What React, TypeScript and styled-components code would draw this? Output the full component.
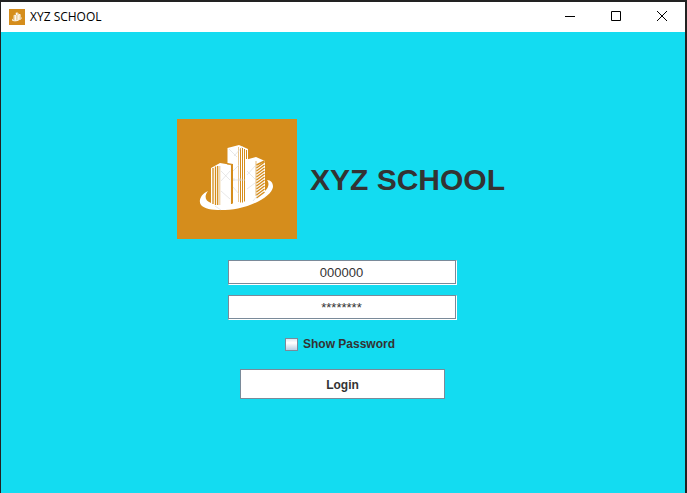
import React, { useState } from "react";
import styled, { createGlobalStyle } from "styled-components";

const steel = "#7a8a99";
const ink = "#333333";
const orange = "#d58d1c";

const GlobalStyle = createGlobalStyle`
  *, *::before, *::after { box-sizing: border-box; }
  body {
    margin: 0;
    background: #222222;
    font-family: "Liberation Sans", Arial, sans-serif;
    color: ${ink};
  }
`;

const Window = styled.div`
  display: flex;
  flex-direction: column;
  min-height: 100vh;
  border: solid #222222;
  border-width: 2px 2px 0 1px;
`;

const TitleBar = styled.header`
  display: flex;
  align-items: center;
  height: 30px;
  padding-left: 8px;
  gap: 5px;
  background: #ffffff;
`;

const Caption = styled.span`
  flex: 1;
  font-family: "Open Sans", "Noto Sans", sans-serif;
  font-size: 12px;
  line-height: 16px;
  color: #000000;
`;

const Controls = styled.div`
  display: flex;
  align-self: stretch;
`;

const ControlButton = styled.button`
  display: grid;
  place-items: center;
  width: 46px;
  padding: 0 0 2px;
  border: 0;
  background: transparent;
  color: #000000;
`;

const LoginForm = styled.form`
  flex: 1;
  display: flex;
  flex-direction: column;
  align-items: center;
  padding: 87px 1px 0 0;
  background: #13dcf1;
`;

const Brand = styled.div`
  display: flex;
  align-items: center;
  gap: 13px;
  padding-right: 3px;
  margin-bottom: 21px;
`;

const Heading = styled.h1`
  margin: 0;
  padding-top: 2px;
  font-size: 30px;
  line-height: 36px;
  font-weight: bold;
`;

const Field = styled.input`
  width: 229px;
  height: 25px;
  margin-bottom: 10px;
  padding: 0 4px 0 2px;
  border: 1px solid;
  border-color: ${steel} #ffffff #ffffff ${steel};
  border-radius: 0;
  outline: 0;
  background: #ffffff;
  box-shadow: inset -1px -1px 0 ${steel};
  color: ${ink};
  font-family: inherit;
  font-size: 13px;
  text-align: center;
`;

const CheckRow = styled.label`
  display: flex;
  align-items: center;
  gap: 5px;
  height: 13px;
  margin: 8px 0 18px;
  padding-right: 5px;
  font-size: 12px;
  line-height: 15px;
  font-weight: bold;
`;

const CheckBox = styled.input`
  appearance: none;
  width: 13px;
  height: 13px;
  margin: 0;
  border: 1px solid ${steel};
  background: linear-gradient(#dde8f3, #ffffff 35%, #b8cfe5);
  &:checked {
    background: ${ink};
    box-shadow: inset 0 0 0 2px #ffffff;
  }
`;

const LoginButton = styled.button`
  width: 205px;
  height: 30px;
  padding: 2px 0 0;
  border: 1px solid ${steel};
  background: #ffffff;
  color: ${ink};
  font-family: inherit;
  font-size: 12px;
  font-weight: bold;
`;

function Logo({ size }: { size: number }) {
  const slants = Array.from({ length: 12 }, (_, i) => 44 + i * 3);
  return (
    <svg width={size} height={size} viewBox="0 0 120 120" aria-hidden="true">
      <rect width="120" height="120" fill={orange} />
      <path
        fill="#fff"
        d="M31 72C24 75 21 82 24 86C29 92 47 92 61 89.500C79 86 95 76 96 68C96 64 94 61 90 61C93 65 91 69 88 72L79 77L70 80L54 85L34 84C28 82 27 77 31 72Z"
      />
      <path fill="#fff" d="M34 49L43 44L55 46V87H34Z" />
      <path fill="#fff" d="M50.500 29L62 26L71 30V85H56V45L50.500 44Z" />
      <path fill="#fff" d="M68 41L79 38L88 42V73L79 79L68 83Z" />
      <g stroke={orange} fill="none">
        <path d="M36 49V85M38.500 47.500V86M40.700 47V86" strokeWidth="1.300" />
        <path d="M42.800 47V86M61.500 28V83" strokeWidth="0.500" />
        <path d="M54.500 46V85" strokeWidth="1.100" />
        <path d="M63.500 29V83.500M65.500 29V83.500M67.500 30V82.500M69.500 31V40" strokeWidth="1" />
        <path d="M50 45L55 46" strokeWidth="0.700" />
        <path d="M79 42V77" strokeWidth="0.600" />
        {slants.map((y) => (
          <path
            key={y}
            d={`M79.500 ${y + 2}L87.500 ${Math.max(42, y - 4)}`}
            strokeWidth="1.400"
          />
        ))}
      </g>
      <path
        d="M52 30L60 38M66 27L57 37M44 52L53 61M53 52L44 62M56 52L62 46M56 68L62 75M70 52L78 60M78 47L70 56M70 70L78 64M44 72L53 80M82 75L76 82M38 87L44 91M56 61h12M57 59v3M63 59v3"
        stroke="#d9d9d9"
        strokeWidth="0.600"
        fill="none"
      />
    </svg>
  );
}

function Glyph({ d }: { d: string }) {
  return (
    <svg width="12" height="12" viewBox="0 0 12 12" aria-hidden="true">
      <path d={d} fill="none" stroke="currentColor" strokeWidth="1" />
    </svg>
  );
}

export default function App() {
  const [user, setUser] = useState("000000");
  const [password, setPassword] = useState("password");
  const [visible, setVisible] = useState(false);

  const editPassword = (next: string) => {
    if (visible) {
      setPassword(next);
      return;
    }
    const typed = next.replace(/\*/g, "");
    setPassword(password.slice(0, next.length - typed.length) + typed);
  };

  return (
    <>
      <GlobalStyle />
      <Window>
        <TitleBar>
          <Logo size={16} />
          <Caption>XYZ SCHOOL</Caption>
          <Controls>
            <ControlButton type="button" aria-label="Minimize">
              <Glyph d="M1 6.500H11" />
            </ControlButton>
            <ControlButton type="button" aria-label="Maximize">
              <Glyph d="M1.500 1.500H10.500V10.500H1.500Z" />
            </ControlButton>
            <ControlButton type="button" aria-label="Close">
              <Glyph d="M1 1L11 11M11 1L1 11" />
            </ControlButton>
          </Controls>
        </TitleBar>
        <LoginForm onSubmit={(e) => e.preventDefault()}>
          <Brand>
            <Logo size={120} />
            <Heading>XYZ SCHOOL</Heading>
          </Brand>
          <Field
            aria-label="User ID"
            value={user}
            onChange={(e) => setUser(e.target.value)}
          />
          <Field
            aria-label="Password"
            autoComplete="off"
            value={visible ? password : "*".repeat(password.length)}
            onChange={(e) => editPassword(e.target.value)}
          />
          <CheckRow>
            <CheckBox
              type="checkbox"
              checked={visible}
              onChange={(e) => setVisible(e.target.checked)}
            />
            Show Password
          </CheckRow>
          <LoginButton type="submit">Login</LoginButton>
        </LoginForm>
      </Window>
    </>
  );
}
